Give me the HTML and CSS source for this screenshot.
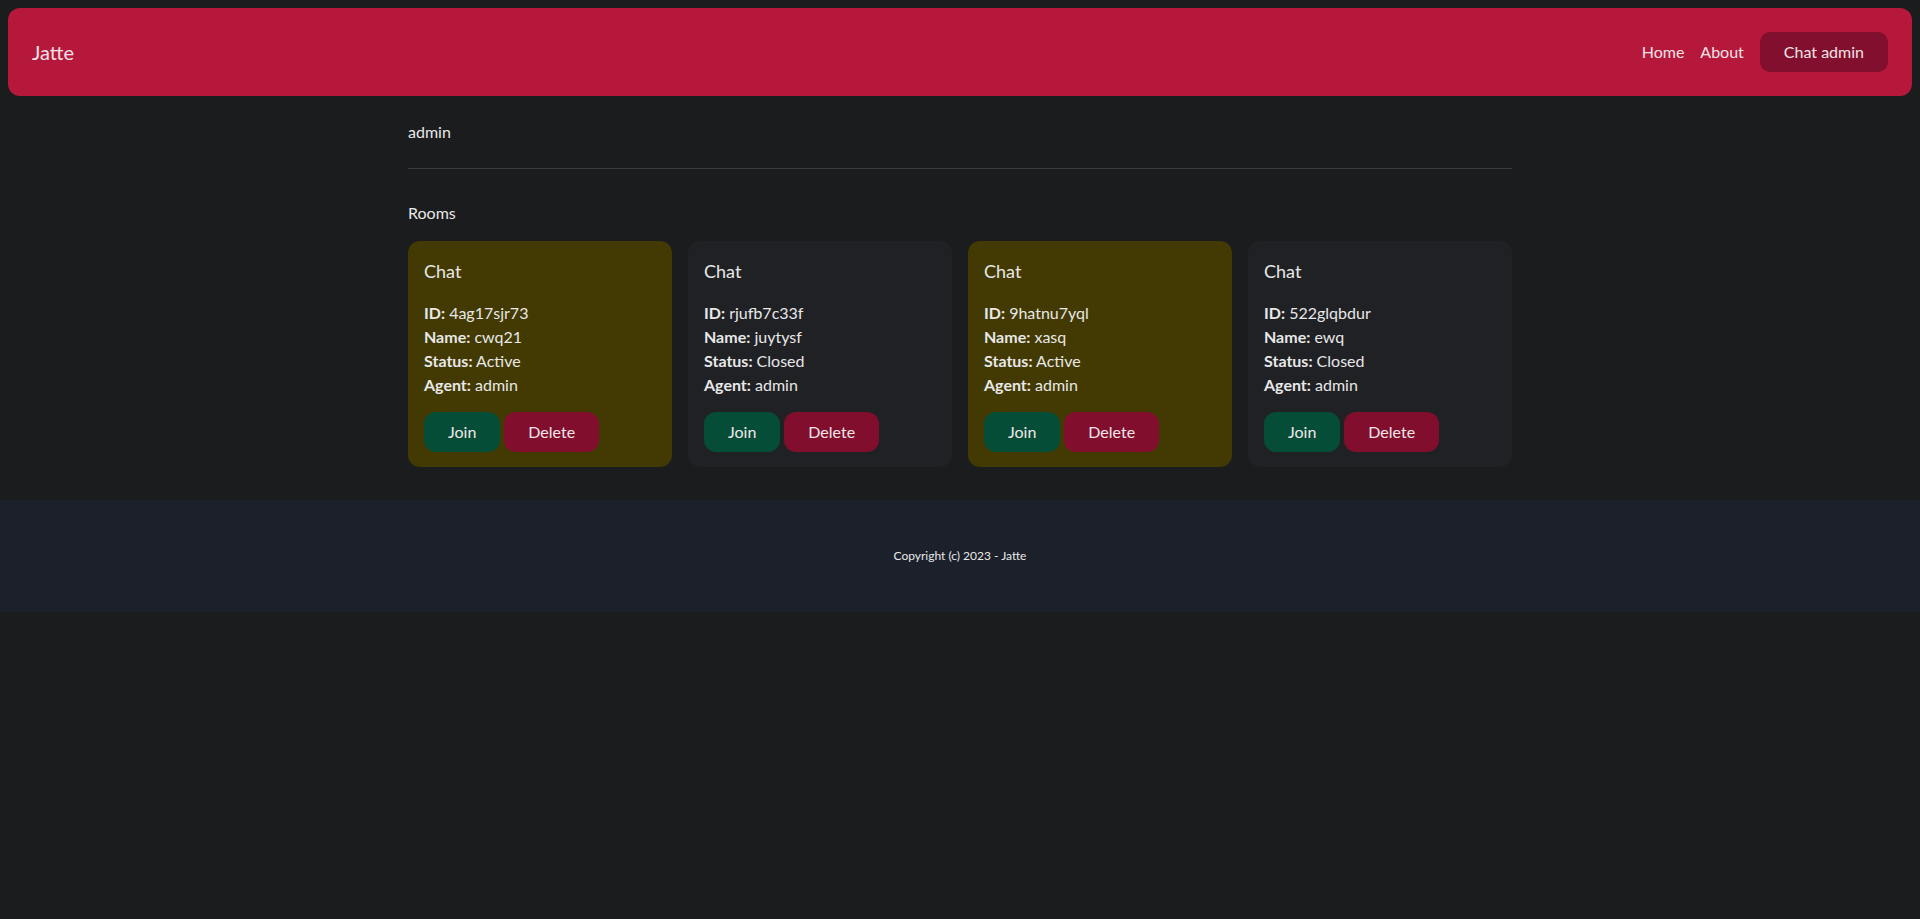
FILE: index.html
```html
<!DOCTYPE html>
<html lang="en">
<head>
<meta charset="utf-8">
<title>Jatte</title>
<link rel="stylesheet" href="styles.css">
</head>
<body>
<nav class="navbar">
  <a class="brand" href="#">Jatte</a>
  <div class="nav-links">
    <a class="nav-link" href="#">Home</a>
    <a class="nav-link" href="#">About</a>
    <a class="nav-btn" href="#">Chat admin</a>
  </div>
</nav>
<main class="main">
  <p class="user">admin</p>
  <hr class="divider">
  <h2 class="section-title">Rooms</h2>
  <div class="rooms">
    <div class="card card-active">
      <h3 class="card-title">Chat</h3>
      <ul class="info">
        <li><b>ID:</b> 4ag17sjr73</li>
        <li><b>Name:</b> cwq21</li>
        <li><b>Status:</b> Active</li>
        <li><b>Agent:</b> admin</li>
      </ul>
      <div class="actions"><a class="btn btn-join" href="#">Join</a><a class="btn btn-delete" href="#">Delete</a></div>
    </div>
    <div class="card">
      <h3 class="card-title">Chat</h3>
      <ul class="info">
        <li><b>ID:</b> rjufb7c33f</li>
        <li><b>Name:</b> juytysf</li>
        <li><b>Status:</b> Closed</li>
        <li><b>Agent:</b> admin</li>
      </ul>
      <div class="actions"><a class="btn btn-join" href="#">Join</a><a class="btn btn-delete" href="#">Delete</a></div>
    </div>
    <div class="card card-active">
      <h3 class="card-title">Chat</h3>
      <ul class="info">
        <li><b>ID:</b> 9hatnu7yql</li>
        <li><b>Name:</b> xasq</li>
        <li><b>Status:</b> Active</li>
        <li><b>Agent:</b> admin</li>
      </ul>
      <div class="actions"><a class="btn btn-join" href="#">Join</a><a class="btn btn-delete" href="#">Delete</a></div>
    </div>
    <div class="card">
      <h3 class="card-title">Chat</h3>
      <ul class="info">
        <li><b>ID:</b> 522glqbdur</li>
        <li><b>Name:</b> ewq</li>
        <li><b>Status:</b> Closed</li>
        <li><b>Agent:</b> admin</li>
      </ul>
      <div class="actions"><a class="btn btn-join" href="#">Join</a><a class="btn btn-delete" href="#">Delete</a></div>
    </div>
  </div>
</main>
<footer class="footer">
  <p>Copyright (c) 2023 - Jatte</p>
</footer>
</body>
</html>
```

FILE: styles.css
```css
* { box-sizing: border-box; }
html, body { margin: 0; padding: 0; }
body {
  background: #1b1c1e;
  color: #e8e8e8;
  font-family: "Segoe UI", Lato, "Noto Sans", sans-serif;
  font-size: 16px;
  line-height: 24px;
  min-height: 919px;
}
a { color: inherit; text-decoration: none; }

.navbar {
  margin: 8px;
  height: 88px;
  padding: 0 24px;
  display: flex;
  align-items: center;
  justify-content: space-between;
  background: #b5183b;
  border-radius: 12px;
}
.brand { font-size: 20px; line-height: 28px; color: #f1e3e6; }
.nav-links { display: flex; align-items: center; gap: 16px; }
.nav-link { font-size: 16px; color: #f1e3e6; }
.nav-btn {
  display: flex;
  align-items: center;
  height: 40px;
  padding: 0 24px;
  background: #830f2e;
  border-radius: 10px;
  color: #f1e3e6;
}

.main { width: 1104px; margin: 0 auto; padding-top: 16px; }
.user { margin: 0; }
.divider { margin: 24px 0 0; border: 0; height: 1px; background: #3a3c3f; }
.section-title { margin: 32px 0 16px; font-size: 16px; font-weight: 400; line-height: 24px; }

.rooms { display: grid; grid-template-columns: repeat(4, 1fr); gap: 16px; }
.card {
  background: #202124;
  border-radius: 12px;
  padding: 16px 16px 15px;
}
.card-active { background: #423a02; }
.card-title { margin: 0 0 16px; font-size: 18px; font-weight: 400; line-height: 28px; }
.info { list-style: none; margin: 0; padding: 0; }
.info b { font-weight: 700; }
.actions { display: flex; gap: 4px; margin-top: 15px; }
.btn {
  display: flex;
  align-items: center;
  justify-content: center;
  height: 40px;
  padding: 0 24px;
  border-radius: 12px;
  color: #f1e6e8;
}
.btn-join { background: #054d37; }
.btn-delete { background: #820e2e; }

.footer {
  margin-top: 33px;
  height: 112px;
  background: #1b202b;
  display: flex;
  align-items: center;
  justify-content: center;
}
.footer p { margin: 0; font-size: 12px; line-height: 16px; color: #e8e8e8; }
```
